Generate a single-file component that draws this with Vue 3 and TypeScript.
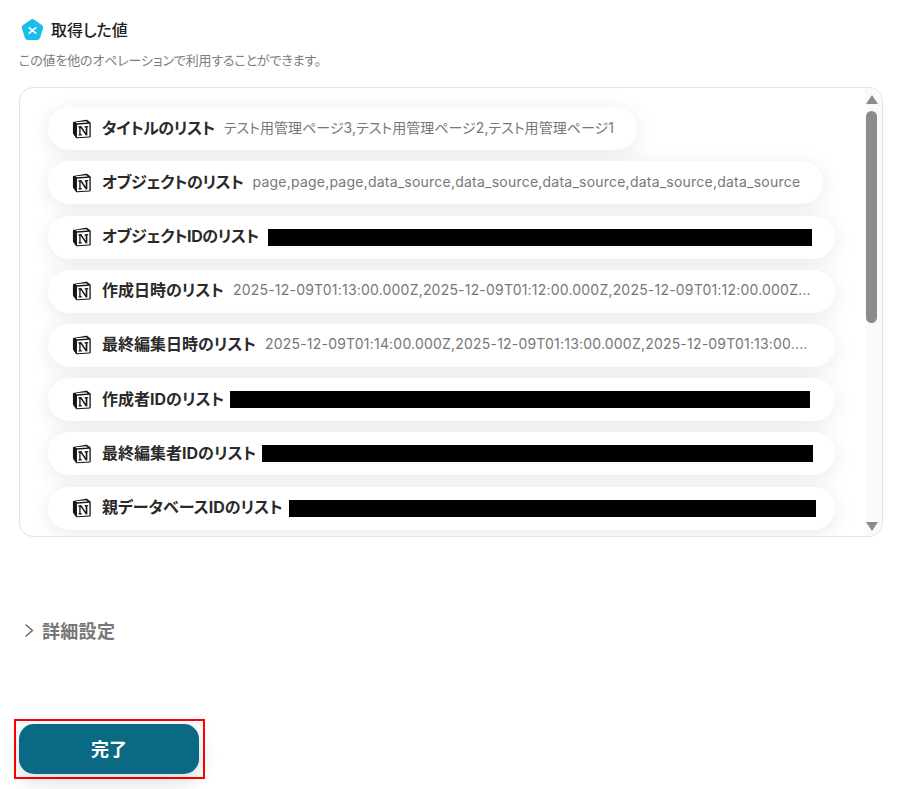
<script setup lang="ts">
interface Row { label: string; value?: string; bar?: number; full?: boolean; kana?: boolean; jp?: boolean }
const rows: Row[] = [
  { label: 'タイトルのリスト', value: 'テスト用管理ページ3,テスト用管理ページ2,テスト用管理ページ1', kana: true, jp: true },
  { label: 'オブジェクトのリスト', value: 'page,page,page,data_source,data_source,data_source,data_source,data_source', kana: true },
  { label: 'オブジェクトIDのリスト', bar: 544, full: true, kana: true },
  { label: '作成日時のリスト', value: '2025-12-09T01:13:00.000Z,2025-12-09T01:12:00.000Z,2025-12-09T01:12:00.000Z...', full: true },
  { label: '最終編集日時のリスト', value: '2025-12-09T01:14:00.000Z,2025-12-09T01:13:00.000Z,2025-12-09T01:13:00....', full: true },
  { label: '作成者IDのリスト', bar: 580, full: true },
  { label: '最終編集者IDのリスト', bar: 551, full: true },
  { label: '親データベースIDのリスト', bar: 527, full: true },
]
</script>

<template>
  <main class="page">
    <header class="heading">
      <svg class="logo" width="23" height="22" viewBox="2 1.500 20 20.500" aria-hidden="true">
        <path d="M10.300 2.100a3 3 0 0 1 3.400 0l7 5a3 3 0 0 1 1.100 3.300l-2.700 8.600a3 3 0 0 1-2.800 2.100H7.700a3 3 0 0 1-2.800-2.100L2.200 10.400a3 3 0 0 1 1.100-3.300z" fill="#1cbdec" />
        <path d="M9 9.700 15 14.700M15 9.700 9 14.700" stroke="#fff" stroke-width="1.600" stroke-linecap="round" fill="none" />
      </svg>
      <h2 class="title">取得した値</h2>
    </header>
    <p class="desc">この値を他のオペレーションで利用することができます。</p>

    <section class="box">
      <div class="list">
        <div v-for="row in rows" :key="row.label" class="pill" :class="{ full: row.full }">
          <svg class="notion" width="20" height="20" viewBox="1 1 18 18.300" aria-hidden="true">
            <path d="M1.800 3.700 13.800 1.800c.6-.1.900 0 1.300.3l2.500 1.800c.3.200.4.500.4.900v12c0 .7-.3 1-.9 1.100L5.500 18.600c-.5 0-.8-.1-1.100-.5l-2.300-3.200c-.3-.4-.4-.7-.4-1.100V4.500c0-.4.200-.7.600-.8z" fill="#161616" />
            <path d="M5.400 6.200 16.800 5.300V17.100L5.400 17.800z" fill="#fff" />
            <path d="M4 3.900 13.700 3 15.300 4.300 5.400 5z" fill="#fff" />
            <path d="M6.700 7.700 9.300 7.500 13.400 13.600V8.900L12.400 8.700V7.600L15.700 7.400V8.400L14.900 8.600V15.900L13.500 16 8.700 9V14.800L9.800 15V16.100L6.800 16.200V15.200L7.500 15V8.900L6.700 8.700z" fill="#161616" />
          </svg>
          <span class="label" :class="{ kana: row.kana }">{{ row.label }}</span>
          <span v-if="row.value" class="value" :class="{ jp: row.jp }">{{ row.value }}</span>
          <span v-if="row.bar" class="redact" :style="{ width: row.bar + 'px' }"></span>
        </div>
      </div>
      <div class="scrollbar" aria-hidden="true">
        <span class="arrow up"></span>
        <span class="track"><span class="thumb"></span></span>
        <span class="arrow down"></span>
      </div>
    </section>

    <button class="advanced" type="button">
      <svg width="12" height="16" viewBox="0 0 12 16" aria-hidden="true">
        <path d="M3.500 2.500 10.500 8.500 3.500 14.500" fill="none" stroke="#666" stroke-width="1.400" />
      </svg>
      <span>詳細設定</span>
    </button>

    <div class="action">
      <button class="done" type="button">完了</button>
    </div>
  </main>
</template>

<style>
html, body { margin: 0; background: #fff; }
</style>

<style scoped>
.page {
  box-sizing: border-box;
  width: 902px;
  height: 789px;
  padding: 18px 19px 0;
  font-family: Inter, "Noto Sans CJK JP", sans-serif;
  font-feature-settings: "palt", "kern";
  overflow: hidden;
}
.heading { display: flex; align-items: center; gap: 7px; padding-left: 2px; height: 24px; }
.logo { flex: none; }
.title { margin: 0; font-size: 16px; font-weight: 500; line-height: 24px; color: #222; }
.desc { margin: 9px 0 0; font-size: 13px; line-height: 18px; letter-spacing: -0.150px; color: #7d7d7d; }
.box {
  box-sizing: border-box;
  display: flex;
  width: 864px;
  height: 450px;
  margin-top: 18px;
  border: 1px solid #e2e2e2;
  border-radius: 14px;
  overflow: hidden;
  background: #fff;
}
.list {
  flex: 1;
  min-width: 0;
  display: flex;
  flex-direction: column;
  align-items: flex-start;
  gap: 11.200px;
  padding: 19.200px 0 0 28px;
  overflow: hidden;
}
.pill {
  box-sizing: border-box;
  flex: none;
  display: flex;
  align-items: center;
  height: 43px;
  padding: 0 23px 0 24px;
  border-radius: 22px;
  background: #fff;
  box-shadow: 0 4px 22px rgba(0, 0, 0, 0.09);
  white-space: nowrap;
}
.pill.full { width: 787px; padding-right: 20px; }
.notion { flex: none; margin-right: 10px; }
.label { flex: none; margin-bottom: 2px; font-size: 16px; font-weight: 700; line-height: 20px; color: #2a2a2a; }
.label.kana { letter-spacing: -0.400px; }
.value {
  min-width: 0;
  margin: 0 0 2px 9px;
  font-size: 14px;
  line-height: 20px;
  color: #777;
  letter-spacing: 0.200px;
}
.kana + .value { letter-spacing: 0.225px; }
.value.jp { letter-spacing: 0.030px; }
.redact { flex: none; height: 17px; margin-left: 6px; background: #000; }
.kana + .redact { margin-left: 9px; }
.scrollbar {
  flex: none;
  display: flex;
  flex-direction: column;
  align-items: center;
  width: 17px;
  padding: 7px 4px 5px 0;
  box-sizing: border-box;
  background: #fafafa;
}
.arrow { flex: none; width: 0; height: 0; border-left: 6.500px solid transparent; border-right: 6.500px solid transparent; }
.up { border-bottom: 9px solid #8b8b8b; }
.down { border-top: 9px solid #8b8b8b; }
.track { flex: 1; width: 11px; padding-top: 7px; }
.thumb { display: block; width: 11px; height: 212px; border-radius: 6px; background: #8b8b8b; }
.advanced {
  display: flex;
  align-items: center;
  gap: 8px;
  margin: 79px 0 0 3px;
  padding: 0;
  height: 28px;
  border: 0;
  background: none;
  font: inherit;
  font-size: 18px;
  font-weight: 700;
  letter-spacing: 0.300px;
  color: #777;
}
.action {
  box-sizing: border-box;
  width: 191px;
  height: 60px;
  margin: 75px 0 0 -5px;
  padding: 3px;
  border: 2px solid #f00;
}
.done {
  display: block;
  width: 180px;
  height: 50px;
  padding: 0 0 2px;
  border: 0;
  border-radius: 15px;
  background: #0b6a83;
  box-shadow: 0 6px 20px rgba(0, 0, 0, 0.16);
  color: #fff;
  font: inherit;
  font-size: 18px;
  font-weight: 700;
}
</style>
